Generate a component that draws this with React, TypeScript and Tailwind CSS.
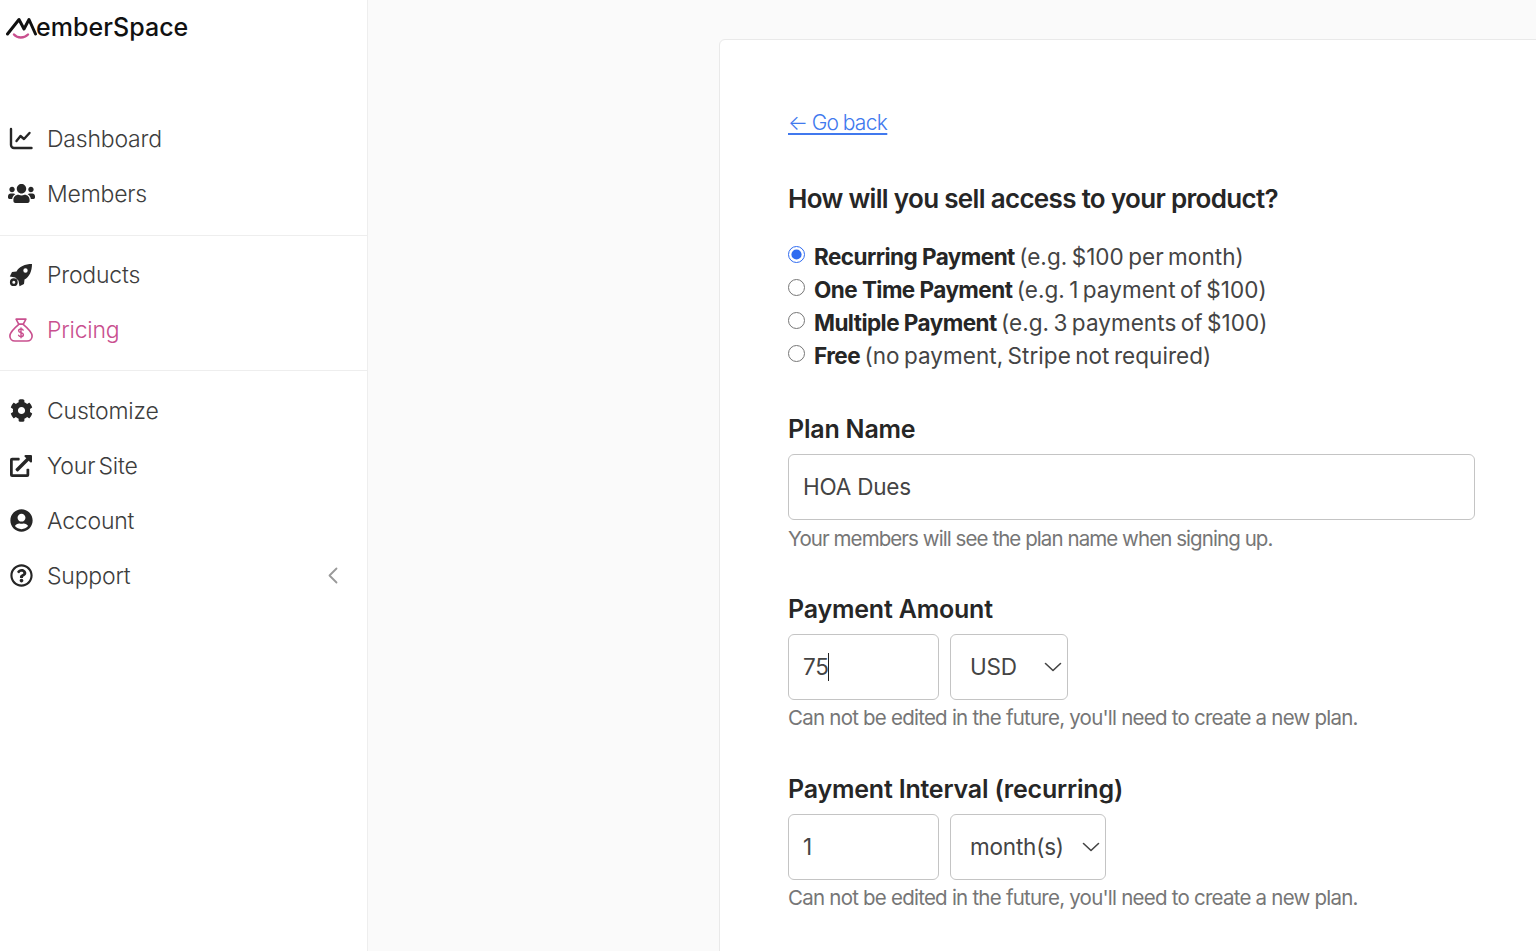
import React from "react";
import { FaUsers, FaCog, FaExternalLinkAlt, FaUserCircle, FaRegQuestionCircle } from "react-icons/fa";

const font = "font-['Inter','Liberation_Sans',sans-serif]";

function ChartIcon() {
  return (
    <svg width="24" height="23" viewBox="0 0 24 23" fill="none" stroke="#262626" strokeWidth="2.400" strokeLinecap="round" strokeLinejoin="round" className="shrink-0">
      <path d="M2 2V18a3 3 0 0 0 3 3H22.500" />
      <path d="M7.500 14l4-5 3.500 3 5.500-6" />
    </svg>
  );
}

function RocketIcon() {
  return (
    <svg width="24" height="24" viewBox="0 0 24 24" className="shrink-0">
      <path fillRule="evenodd" fill="#262626" d="M23 1C16 1 10 3.500 7.500 8.500L3 9 .8 13.500l5.500 1 3.200 3.200 1 5.500 4.500-2.200.5-4.500C20.500 14 23 8 23 1ZM16.500 5.300a2.200 2.200 0 1 1 0 4.400 2.200 2.200 0 0 1 0-4.400Z" />
      <circle cx="4.800" cy="19.200" r="2.700" fill="none" stroke="#262626" strokeWidth="2.400" />
    </svg>
  );
}

function MoneyBag() {
  return (
    <svg width="24" height="24" viewBox="1 1.500 22 21.500" fill="none" stroke="#c9508f" strokeWidth="1.500" strokeLinejoin="round" strokeLinecap="round" className="shrink-0">
      <path d="M7.500 2.300h9l-2.500 4.700h-4z" />
      <path d="M10 7h4c3 2.500 8.200 7 8.200 10.700 0 2.800-2 4.600-4.700 4.600h-11c-2.700 0-4.700-1.800-4.700-4.600C1.800 14 7 9.500 10 7z" />
      <path d="M14 12.300c-.5-.7-1.200-1-2-1-1.200 0-2.200.6-2.200 1.700 0 2.300 4.400 1.200 4.400 3.500 0 1.100-1 1.700-2.200 1.700-.9 0-1.700-.4-2.200-1.100M12 10.300v9" strokeWidth="1.300" />
    </svg>
  );
}

function Logo() {
  return (
    <div className="flex items-center h-[28px] ml-[6px] mt-[14px]">
      <svg width="31" height="24" viewBox="0 0 31 24" fill="none" className="shrink-0">
        <path d="M1.500 18 L13 3.500 L18 13 L23 3.500 L29.500 18" stroke="#111111" strokeWidth="3" strokeLinejoin="round" strokeLinecap="round" />
        <path d="M8 18.500c3.500 4 10 4 14 0" stroke="#c9508f" strokeWidth="2.400" strokeLinecap="round" />
      </svg>
      <span className="text-[25px] font-medium text-[#111111] -ml-[1px] tracking-[0.05px]">emberSpace</span>
    </div>
  );
}

function NavItem({ icon, label, active, chevron }: { icon: React.ReactNode; label: string; active?: boolean; chevron?: boolean }) {
  return (
    <div className={`flex items-center h-[55px] pl-[9px] pr-[29px] ${active ? "text-[#c9508f]" : "text-[#3d3d3d]"}`}>
      <span className={`w-[24px] flex justify-center ${active ? "text-[#c9508f]" : "text-[#262626]"}`}>{icon}</span>
      <span className="ml-[14px] text-[23px] tracking-[-0.2px] [word-spacing:-3px] flex-1 translate-y-[1px] font-[350]">{label}</span>
      {chevron && (
        <svg width="10" height="17" viewBox="0 0 10 17" fill="none" stroke="#999999" strokeWidth="1.800" strokeLinecap="round" strokeLinejoin="round" className="shrink-0">
          <path d="M8.500 1.500 1.500 8.500l7 7" />
        </svg>
      )}
    </div>
  );
}

function Radio({ checked, bold, rest }: { checked?: boolean; bold: string; rest: string }) {
  return (
    <label className="flex items-center h-[33px]">
      <input type="radio" name="access" defaultChecked={checked} className="w-[17px] h-[17px] m-0 accent-[#2f6bf0] -translate-y-[2px]" />
      <span className="ml-[9px] text-[22.500px] tracking-[0.05px] [word-spacing:-2px] text-[#444444]">
        <b className="font-bold text-[#262626] tracking-[-0.55px] [word-spacing:0px]">{bold}</b> {rest}
      </span>
    </label>
  );
}

function Box({ className, children }: { className: string; children: React.ReactNode }) {
  return <div className={`h-[66px] border border-[#c4c4c4] rounded-[6px] flex items-center text-[22.500px] tracking-[-0.2px] text-[#444444] bg-white ${className}`}>{children}</div>;
}

function Chevron() {
  return (
    <svg width="18" height="10" viewBox="0 0 18 10" fill="none" stroke="#444444" strokeWidth="1.600" strokeLinecap="round" strokeLinejoin="round" className="shrink-0">
      <path d="M1.500 1.500 9 8.500l7.500-7" />
    </svg>
  );
}

function Hint({ children, className }: { children: React.ReactNode; className: string }) {
  return <p className={`text-[20.500px] leading-[28px] text-[#767676] mt-[4.500px] ${className}`}>{children}</p>;
}

function Label({ children }: { children: React.ReactNode }) {
  return <h3 className="text-[25px] leading-[32px] font-semibold tracking-[-0.2px] text-[#262626] mb-[9px]">{children}</h3>;
}

export default function App() {
  return (
    <div className={`flex h-[951px] w-[1536px] overflow-hidden bg-[#fafafa] ${font}`}>
      <aside className="w-[368px] shrink-0 bg-white border-r border-[#eeeeee]">
        <Logo />
        <nav className="mt-[69px]">
          <div className="pb-[14px] border-b border-[#eeeeee]">
            <NavItem icon={<ChartIcon />} label="Dashboard" />
            <NavItem icon={<FaUsers size={27} className="shrink-0" />} label="Members" />
          </div>
          <div className="pt-[11px] pb-[13px] border-b border-[#eeeeee]">
            <NavItem icon={<RocketIcon />} label="Products" />
            <NavItem icon={<MoneyBag />} label="Pricing" active />
          </div>
          <div className="pt-[12px]">
            <NavItem icon={<FaCog size={23} />} label="Customize" />
            <NavItem icon={<FaExternalLinkAlt size={22} />} label="Your Site" />
            <NavItem icon={<FaUserCircle size={23} />} label="Account" />
            <NavItem icon={<FaRegQuestionCircle size={23} />} label="Support" chevron />
          </div>
        </nav>
      </aside>
      <main className="flex-1 pl-[351px] pt-[39px]">
        <section className="w-[900px] h-[960px] bg-white border border-[#e9e9e9] rounded-[6px] pl-[68px] pt-[69px]">
          <a href="#" className="inline-block text-[21px] leading-[28px] tracking-[-0.65px] [word-spacing:-1px] text-[#4179ee] underline underline-offset-[3px] font-[350]">← Go back</a>
          <h2 className="mt-[45px] text-[26px] leading-[34px] font-semibold tracking-[-0.68px] text-[#262626]">How will you sell access to your product?</h2>
          <div className="mt-[24px]">
            <Radio checked bold="Recurring Payment" rest="(e.g. $100 per month)" />
            <Radio bold="One Time Payment" rest="(e.g. 1 payment of $100)" />
            <Radio bold="Multiple Payment" rest="(e.g. 3 payments of $100)" />
            <Radio bold="Free" rest="(no payment, Stripe not required)" />
          </div>
          <div className="mt-[41px]">
            <Label>Plan Name</Label>
            <Box className="w-[687px] pl-[14px]">HOA Dues</Box>
            <Hint className="tracking-[-0.93px]">Your members will see the plan name when signing up.</Hint>
          </div>
          <div className="mt-[40px]">
            <Label>Payment Amount</Label>
            <div className="flex gap-[11px]">
              <Box className="w-[151px] pl-[14px]">75<span className="w-[1.500px] h-[28px] bg-[#222222] -ml-[1px]" /></Box>
              <Box className="w-[118px] pl-[19px] pr-[5px] justify-between">USD<Chevron /></Box>
            </div>
            <Hint className="tracking-[-0.77px]">Can not be edited in the future, you'll need to create a new plan.</Hint>
          </div>
          <div className="mt-[40.500px]">
            <Label>Payment Interval (recurring)</Label>
            <div className="flex gap-[11px]">
              <Box className="w-[151px] pl-[14px]">1</Box>
              <Box className="w-[156px] pl-[19px] pr-[5px] justify-between">month(s)<Chevron /></Box>
            </div>
            <Hint className="tracking-[-0.77px]">Can not be edited in the future, you'll need to create a new plan.</Hint>
          </div>
        </section>
      </main>
    </div>
  );
}
